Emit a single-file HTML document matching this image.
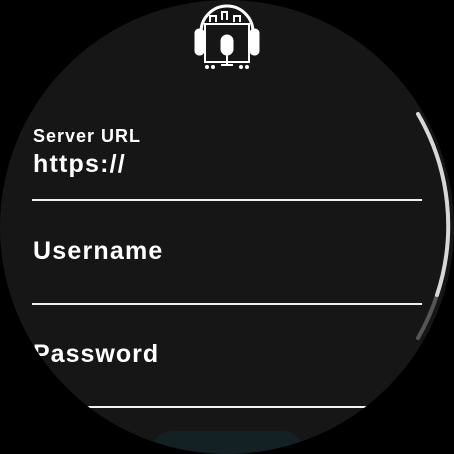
<!DOCTYPE html>
<html><head><style>
html,body{margin:0;padding:0;background:#000;width:454px;height:454px;overflow:hidden}
.c{position:absolute;left:0;top:0;width:454px;height:454px;border-radius:50%;background:#161616;overflow:hidden}
.t{position:absolute;color:#fff;font-family:"Liberation Sans",sans-serif;left:33px;font-weight:bold}
.l{position:absolute;left:32px;width:390px;height:2px;background:#f2f2f2}
.btn{position:absolute;left:150px;top:431px;width:155px;height:23px;border-radius:24px 24px 0 0;background:#132024}
</style></head><body>
<div class="c">
<div class="t" style="top:126px;font-size:18px;letter-spacing:1px">Server URL</div>
<div class="t" style="top:150px;font-size:25px;letter-spacing:1.2px">https://</div>
<div class="l" style="top:199px"></div>
<div class="t" style="top:237px;font-size:25px;letter-spacing:1.2px">Username</div>
<div class="l" style="top:303px"></div>
<div class="t" style="top:340px;font-size:25px;letter-spacing:1px">Password</div>
<div class="l" style="top:406px"></div>
<div class="btn"></div>
</div>
<svg width="454" height="454" style="position:absolute;left:0;top:0">
<path d="M418 338 A221 221 0 0 0 437 295" stroke="#555" stroke-width="4" fill="none" stroke-linecap="round"/>
<path d="M437 295 A221 221 0 0 0 418 114" stroke="#d8d8d8" stroke-width="4" fill="none" stroke-linecap="round"/>
<g fill="none" stroke="#fff" stroke-width="3">
<path d="M201 32 A26 26 0 0 1 253 32"/>
<rect x="196" y="30" width="7" height="24" rx="3" fill="#fff"/>
<rect x="251" y="30" width="7" height="24" rx="3" fill="#fff"/>
<rect x="205" y="24" width="44" height="38" stroke-width="2"/>
<path d="M210 22v-6h6v6M222 20v-8h5v8M234 22v-6h6v6" stroke-width="2"/>
<rect x="222" y="36" width="10" height="18" rx="5" fill="#fff"/>
<path d="M227 54v10M221 65h12" stroke-width="2"/>
</g>
<g fill="#fff"><circle cx="207" cy="67" r="2"/><circle cx="213" cy="67" r="2"/><circle cx="241" cy="67" r="2"/><circle cx="247" cy="67" r="2"/></g>
</svg>
</body></html>
